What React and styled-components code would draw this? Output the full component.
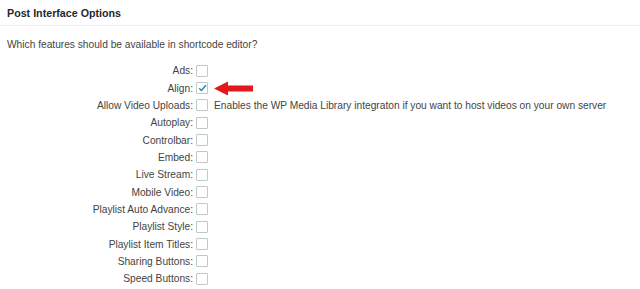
import React from 'react';
import styled, { createGlobalStyle } from 'styled-components';

const Global = createGlobalStyle`
  body {
    margin: 0;
    background: #fff;
    font-family: "Liberation Sans", Arial, sans-serif;
    color: #444;
  }
`;

const Page = styled.div`
  width: 640px;
  height: 289px;
  overflow: hidden;
`;

const Header = styled.h2`
  margin: 0;
  height: 25px;
  padding: 0 7px;
  display: flex;
  align-items: center;
  font-size: 10.7px;
  font-weight: bold;
  color: #23282d;
  border-bottom: 1px solid #eeeeee;
`;

const Intro = styled.p`
  margin: 12px 0 0 7px;
  font-size: 10.2px;
  color: #444;
  line-height: 14px;
`;

const Options = styled.div`
  margin-top: 10px;
  display: grid;
  grid-template-columns: 193px auto;
  grid-auto-rows: 17.35px;
  column-gap: 3px;
  align-items: center;
`;

const Label = styled.div`
  text-align: right;
  font-size: 10.2px;
  color: #444;
  white-space: nowrap;
`;

const Cell = styled.div`
  display: flex;
  align-items: center;
  gap: 6px;
`;

const Box = styled.span`
  width: 12px;
  height: 12px;
  border: 1px solid #c4c6c8;
  border-radius: 1px;
  background: #fff;
  box-sizing: border-box;
  flex: none;
  display: flex;
  align-items: center;
  justify-content: center;
`;

const Hint = styled.span`
  font-size: 10.2px;
  color: #444;
  white-space: nowrap;
`;

const Arrow = styled.svg`
  display: block;
`;

const options = [
  { label: 'Ads' },
  { label: 'Align', checked: true, arrow: true },
  { label: 'Allow Video Uploads', hint: 'Enables the WP Media Library integraton if you want to host videos on your own server' },
  { label: 'Autoplay' },
  { label: 'Controlbar' },
  { label: 'Embed' },
  { label: 'Live Stream' },
  { label: 'Mobile Video' },
  { label: 'Playlist Auto Advance' },
  { label: 'Playlist Style' },
  { label: 'Playlist Item Titles' },
  { label: 'Sharing Buttons' },
  { label: 'Speed Buttons' },
];

const Check = () => (
  <svg width="9" height="8" viewBox="0 0 9 8">
    <path d="M1.2 4.3 L3.4 6.5 L7.9 1.2" fill="none" stroke="#1e8cbe" strokeWidth="1.5" />
  </svg>
);

const RedArrow = () => (
  <Arrow width="39" height="15" viewBox="0 0 39 15">
    <polygon points="0,7.5 14,0.5 14,4.5 39,4.5 39,10.5 14,10.5 14,14.5" fill="#e4171b" />
  </Arrow>
);

const App = () => (
  <Page>
    <Global />
    <Header>Post Interface Options</Header>
    <Intro>Which features should be available in shortcode editor?</Intro>
    <Options>
      {options.map((o) => (
        <React.Fragment key={o.label}>
          <Label>{o.label}:</Label>
          <Cell>
            <Box>{o.checked && <Check />}</Box>
            {o.arrow && <RedArrow />}
            {o.hint && <Hint>{o.hint}</Hint>}
          </Cell>
        </React.Fragment>
      ))}
    </Options>
  </Page>
);

export default App;
